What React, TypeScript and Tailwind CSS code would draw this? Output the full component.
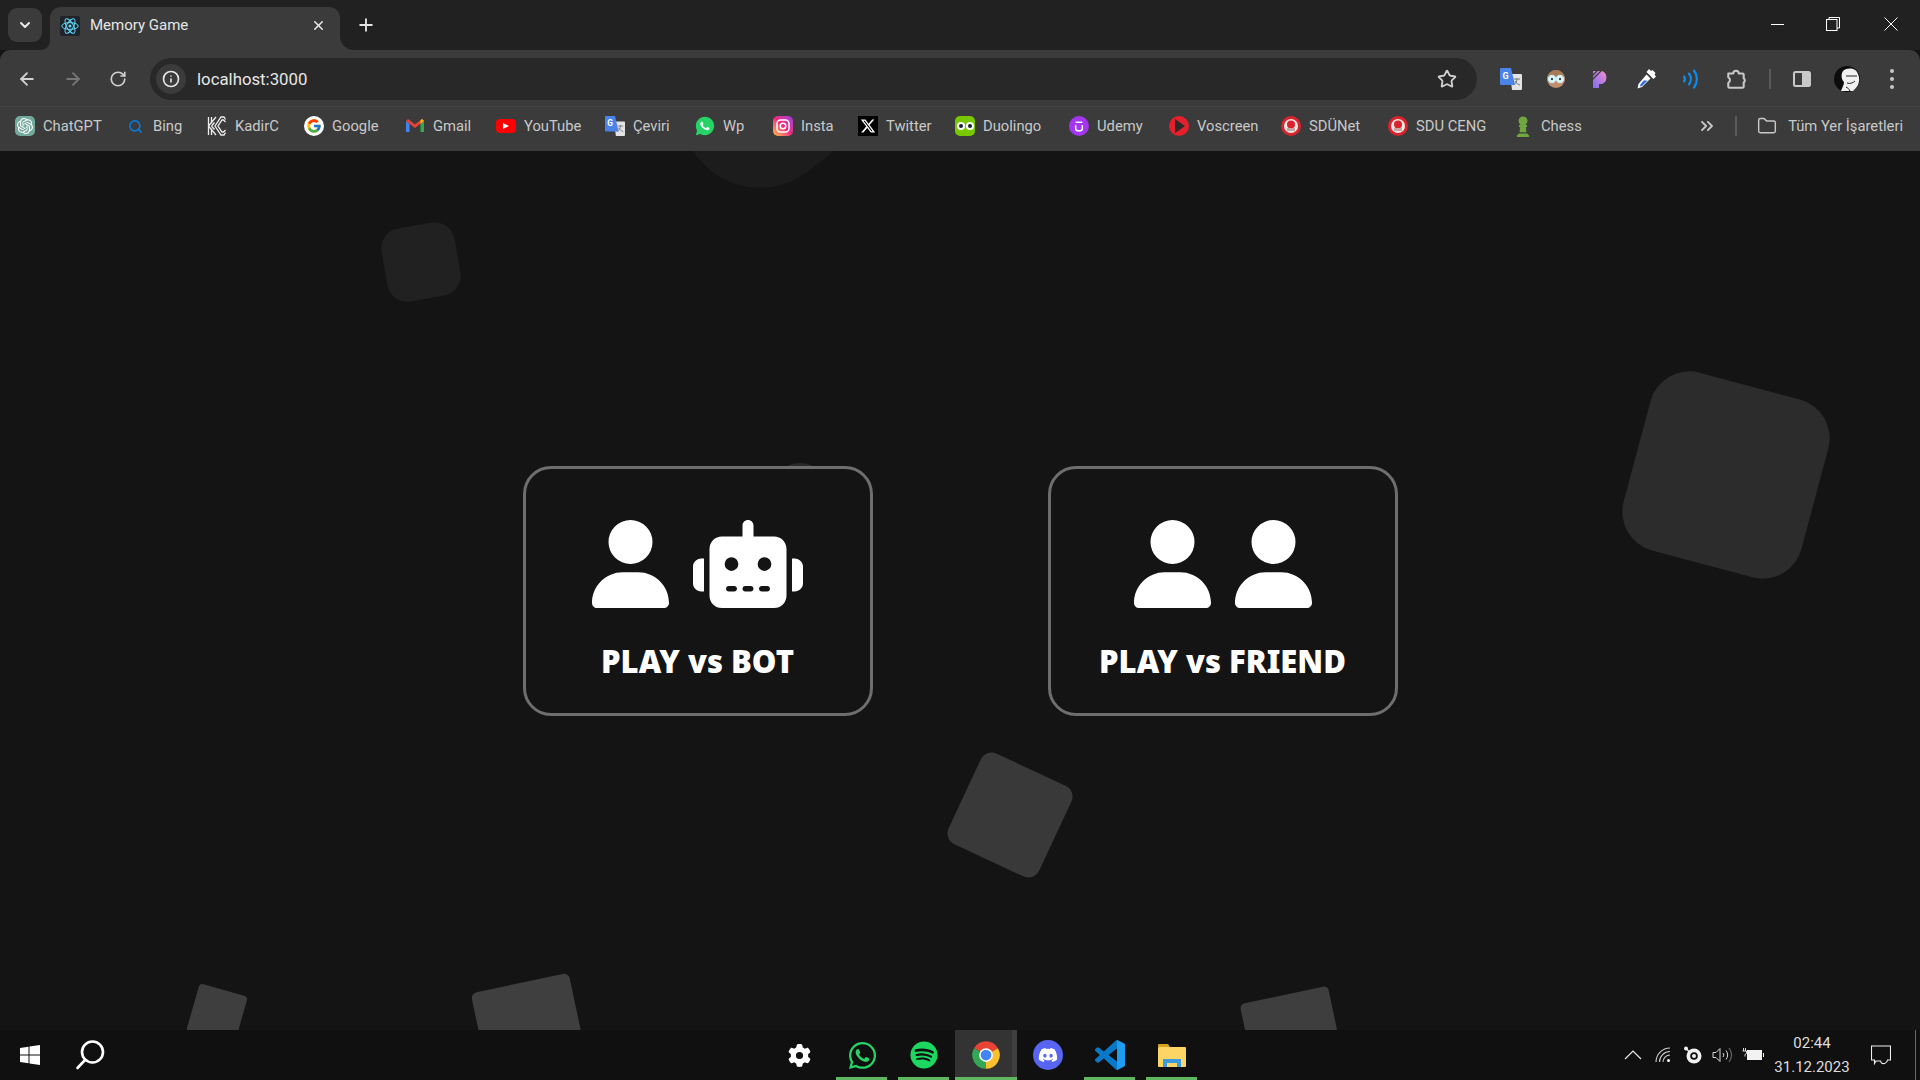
import { ArrowLeft, ArrowRight, RotateCw, Star, ChevronDown, X, Plus, ChevronsRight, Folder, Info, Search } from 'lucide-react';
import { FaUser, FaRobot, FaWhatsapp, FaSpotify, FaDiscord, FaXTwitter, FaChessPawn, FaGear } from 'react-icons/fa6';
import { FcGoogle } from 'react-icons/fc';
import { RiWhatsappFill } from 'react-icons/ri';
import { SiOpenai } from 'react-icons/si';
import type { ReactNode } from 'react';

function TranslateIcon({ big }: { big?: boolean }) {
  return (
    <svg viewBox="0 0 22 22" className={big ? 'w-[22px] h-[22px]' : 'w-[20px] h-[20px]'}>
      <path d="M10 6h11a1 1 0 0 1 1 1v14a1 1 0 0 1-1 1H12z" fill="#e3e3e3" />
      <path d="M14 11h6M17 10v1c0 3-2 5-3.500 6M15 13c1 2 3 3.500 5 4" stroke="#777" strokeWidth="1" fill="none" />
      <path d="M1 0h10l4 17H1a1 1 0 0 1-1-1V1a1 1 0 0 1 1-1z" fill="#4a84e8" />
      <text x="2.500" y="11" fontSize="9" fontWeight="700" fill="#fff" fontFamily="Roboto, sans-serif">G</text>
    </svg>
  );
}

function SduIcon() {
  return (
    <svg viewBox="0 0 20 20" className="w-5 h-5">
      <circle cx="10" cy="10" r="10" fill="#d9232d" />
      <circle cx="10" cy="10" r="7" fill="#f5e9e6" />
      <circle cx="10" cy="8.500" r="4" fill="#d9232d" />
      <rect x="6" y="12" width="8" height="3" fill="#c9a4a0" />
    </svg>
  );
}

type Bookmark = { label: string; width: string; icon: ReactNode };

const bookmarks: Bookmark[] = [
  {
    label: 'ChatGPT',
    width: 'w-[110px]',
    icon: (
      <div className="w-5 h-5 rounded-[5px] bg-[#74aa9c] flex items-center justify-center">
        <SiOpenai className="w-4 h-4 text-white" />
      </div>
    ),
  },
  { label: 'Bing', width: 'w-[82px]', icon: <Search className="w-[15px] h-[15px] text-[#0a78d6]" strokeWidth={2.6} /> },
  {
    label: 'KadirC',
    width: 'w-[97px]',
    icon: (
      <svg viewBox="0 0 20 20" className="w-5 h-5" fill="none" stroke="#eee" strokeWidth="1.300">
        <path d="M1.500 1v18M4.500 1v6.500M4.500 12.500V19M1.500 10L9 1M1.500 10L9 19M4.500 10l3-3.500M4.500 10l3 3.500" />
        <path d="M18.500 3.500L17 1h-3l-6 9 6 9h3l1.500-2.500M18.500 6l-2-2h-1.500L11 10l4 6h1.500l2-2" />
      </svg>
    ),
  },
  {
    label: 'Google',
    width: 'w-[101px]',
    icon: (
      <div className="w-5 h-5 rounded-full bg-white flex items-center justify-center">
        <FcGoogle className="w-4 h-4" />
      </div>
    ),
  },
  {
    label: 'Gmail',
    width: 'w-[91px]',
    icon: (
      <svg viewBox="0 0 20 20" className="w-5 h-5">
        <path d="M1 5v11h3.500V8z" fill="#4285f4" />
        <path d="M19 5v11h-3.500V8z" fill="#34a853" />
        <path d="M1 5l9 7 9-7-2-2-7 5.500L3 3z" fill="#ea4335" />
        <path d="M15.500 8L19 5l-2-2-1.500 1.200z" fill="#fbbc04" />
      </svg>
    ),
  },
  {
    label: 'YouTube',
    width: 'w-[109px]',
    icon: (
      <div className="w-5 h-[14px] rounded-[4px] bg-[#f00] flex items-center justify-center">
        <div className="w-0 h-0 border-y-[3.5px] border-y-transparent border-l-[6px] border-l-white" />
      </div>
    ),
  },
  { label: 'Çeviri', width: 'w-[90px]', icon: <TranslateIcon /> },
  {
    label: 'Wp',
    width: 'w-[78px]',
    icon: (
      <div className="relative w-5 h-5">
        <div className="absolute inset-[3px] rounded-full bg-white" />
        <RiWhatsappFill className="relative w-[22px] h-[22px] -m-px text-[#25d366]" />
      </div>
    ),
  },
  {
    label: 'Insta',
    width: 'w-[85px]',
    icon: (
      <div className="w-5 h-5 rounded-[5px] bg-linear-to-tr from-[#fdb531] via-[#f0247f] to-[#a02ee0] flex items-center justify-center">
        <svg viewBox="0 0 14 14" className="w-[14px] h-[14px]" fill="none" stroke="#fff" strokeWidth="1.500">
          <rect x="1" y="1" width="12" height="12" rx="3.500" />
          <circle cx="7" cy="7" r="2.800" />
        </svg>
      </div>
    ),
  },
  {
    label: 'Twitter',
    width: 'w-[97px]',
    icon: (
      <div className="w-5 h-5 bg-black flex items-center justify-center">
        <FaXTwitter className="w-4 h-4 text-white" />
      </div>
    ),
  },
  {
    label: 'Duolingo',
    width: 'w-[114px]',
    icon: (
      <div className="w-5 h-5 rounded-[5px] bg-[#78c800] flex items-center justify-center gap-px">
        <div className="w-[8px] h-[8px] rounded-full bg-white flex items-center justify-center">
          <div className="w-[4px] h-[4px] rounded-full bg-[#123]" />
        </div>
        <div className="w-[8px] h-[8px] rounded-full bg-white flex items-center justify-center">
          <div className="w-[4px] h-[4px] rounded-full bg-[#123]" />
        </div>
      </div>
    ),
  },
  {
    label: 'Udemy',
    width: 'w-[100px]',
    icon: (
      <div className="w-5 h-5 rounded-full bg-[#a435f0] flex items-center justify-center">
        <svg viewBox="0 0 12 14" className="w-[10px] h-[14px]" fill="none" stroke="#fff" strokeWidth="1.800">
          <path d="M2 6v4a4 3 0 0 0 8 0V6M2 2.500h8" />
        </svg>
      </div>
    ),
  },
  {
    label: 'Voscreen',
    width: 'w-[112px]',
    icon: (
      <svg viewBox="0 0 20 20" className="w-5 h-5">
        <circle cx="10" cy="10" r="10" fill="#e3202c" />
        <path d="M6 3l10 7-10 7z" fill="#2b2b2b" />
      </svg>
    ),
  },
  { label: 'SDÜNet', width: 'w-[107px]', icon: <SduIcon /> },
  { label: 'SDU CENG', width: 'w-[125px]', icon: <SduIcon /> },
  { label: 'Chess', width: 'w-[80px]', icon: <FaChessPawn className="w-5 h-[22px] text-[#6fa83e]" /> },
];

// decorative squares floating behind the menu, all full class names
const shapes = [
  'left-[384px] top-[74px] w-[74px] h-[74px] rounded-[20px] -rotate-10 bg-[#212121]',
  'left-[647px] -top-[220px] w-[240px] h-[240px] rounded-[78px] -rotate-38 bg-[#1c1c1c]',
  'left-[1634px] top-[232px] w-[184px] h-[184px] rounded-[40px] rotate-15 bg-[#2c2c2c]',
  'left-[960px] top-[614px] w-[100px] h-[100px] rounded-[12px] rotate-25 bg-[#393939]',
  'left-[1248px] top-[843px] w-[90px] h-[90px] rounded-[5px] -rotate-12 bg-[#3e3e3e]',
  'left-[192px] top-[838px] w-[50px] h-[50px] rounded-[4px] rotate-16 bg-[#3e3e3e]',
  'left-[480px] top-[831px] w-[100px] h-[100px] rounded-[6px] -rotate-12 bg-[#3f3f3f]',
  'left-[770px] top-[312px] w-[60px] h-[60px] rounded-full bg-[#2a2a2a]',
];

function GameCard({ label, children }: { label: string; children: ReactNode }) {
  return (
    <button className="relative z-10 w-[350px] h-[250px] rounded-[28px] border-[3px] border-[#6e6e6e] bg-[#141414] flex flex-col items-center pt-[51px] text-white">
      <div className="flex gap-[24px]">{children}</div>
      <div className="mt-[33px] font-['Noto_Sans',sans-serif] text-[31px] leading-[40px] font-black whitespace-nowrap">
        {label}
      </div>
    </button>
  );
}

function TaskItem({ children, line, active }: { children: ReactNode; line?: boolean; active?: boolean }) {
  return (
    <div className={active ? 'relative w-[62px] h-full flex items-center justify-center bg-[#333333]' : 'relative w-[62px] h-full flex items-center justify-center'}>
      {children}
      {active && <div className="absolute right-0 top-0 bottom-0 w-[5px] bg-[#3f3f3f]" />}
      {line && <div className={active ? 'absolute bottom-0 inset-x-0 h-[3px] bg-[#5fb760]' : 'absolute bottom-0 left-[5px] right-[6px] h-[3px] bg-[#5fb760]'} />}
    </div>
  );
}

export default function App() {
  return (
    <div className="h-screen w-screen overflow-hidden flex flex-col bg-[#141414] font-[Roboto,sans-serif]">
      {/* tab strip */}
      <div className="h-[50px] shrink-0 bg-[#202120] flex items-end">
        <div className="ml-2 mb-2 w-[34px] h-[34px] rounded-[9px] bg-[#3b3b3b] flex items-center justify-center">
          <ChevronDown className="w-4 h-4 text-[#e8e8e8]" strokeWidth={3} />
        </div>
        <div className="relative ml-2 w-[290px] h-[43px] rounded-t-[11px] bg-[#3b3b3b] flex items-center pl-[10px] pr-[14px] pb-[6px]">
          <div className="absolute -left-[9px] bottom-0 w-[9px] h-[9px] bg-[#3b3b3b]">
            <div className="w-full h-full rounded-br-[9px] bg-[#202120]" />
          </div>
          <div className="absolute -right-[14px] bottom-0 w-[14px] h-[14px] bg-[#3b3b3b]">
            <div className="w-full h-full rounded-bl-[14px] bg-[#202120]" />
          </div>
          <div className="w-5 h-5 bg-[#20232a] rounded-[2px] flex items-center justify-center">
            <svg viewBox="-12 -12 24 24" className="w-[18px] h-[18px]" fill="none" stroke="#61dafb" strokeWidth="1.300">
              <circle r="2" fill="#61dafb" stroke="none" />
              <ellipse rx="11" ry="4.500" />
              <ellipse rx="11" ry="4.500" transform="rotate(60)" />
              <ellipse rx="11" ry="4.500" transform="rotate(120)" />
            </svg>
          </div>
          <span className="ml-[10px] text-[15px] text-[#e6e6e6]">Memory Game</span>
          <X className="ml-auto w-[15px] h-[15px] text-[#e6e6e6]" strokeWidth={2.5} />
        </div>
        <div className="ml-[16px] mb-[15px]">
          <Plus className="w-[20px] h-[20px] text-[#e6e6e6]" strokeWidth={2.2} />
        </div>
        <div className="ml-auto self-start mt-[15px] flex items-center text-white">
          <div className="w-[58px] h-[18px] flex items-center justify-center pl-[4px]">
            <div className="w-[13px] h-px bg-white" />
          </div>
          <div className="w-[58px] h-[18px] flex items-center justify-center">
            <svg viewBox="0 0 14 14" className="w-[14px] h-[14px]" fill="none" stroke="#fff" strokeWidth="1">
              <rect x="0.500" y="2.500" width="10.500" height="11" />
              <path d="M3 2.500V0.500h10.500v10.500H11" />
            </svg>
          </div>
          <div className="w-[58px] h-[18px] flex items-center justify-center">
            <svg viewBox="0 0 14 14" className="w-[14px] h-[14px]" stroke="#fff" strokeWidth="1">
              <path d="M0.500 0.500l13 13M13.500 0.500l-13 13" />
            </svg>
          </div>
        </div>
      </div>

      {/* toolbar */}
      <div className="h-[57px] shrink-0 bg-[#3b3b3b] rounded-t-[10px] flex items-center pt-[2px] border-b border-[#444444]">
        <div className="ml-[4px] w-[46px] flex justify-center">
          <ArrowLeft className="w-[20px] h-[20px] text-[#d0d0d0]" strokeWidth={2.2} />
        </div>
        <div className="w-[46px] flex justify-center">
          <ArrowRight className="w-[20px] h-[20px] text-[#767676]" strokeWidth={2.2} />
        </div>
        <div className="w-[46px] flex justify-center pr-[2px]">
          <RotateCw className="w-[18px] h-[18px] text-[#d0d0d0]" strokeWidth={2.2} />
        </div>
        <div className="ml-[8px] flex-1 h-[42px] rounded-full bg-[#282828] flex items-center pl-[6px] pr-[20px]">
          <div className="w-[30px] h-[30px] rounded-full bg-[#3b3b3b] flex items-center justify-center">
            <Info className="w-[18px] h-[18px] text-[#e6e6e6]" strokeWidth={2.2} />
          </div>
          <span className="ml-[11px] mt-[2px] text-[16.8px] text-[#e6e6e6]">localhost:3000</span>
          <Star className="ml-auto w-[20px] h-[20px] text-[#d0d0d0]" strokeWidth={2.2} />
        </div>
        <div className="w-[443px] shrink-0 flex items-center pl-[11px]">
          <div className="w-[45px] flex justify-center">
            <TranslateIcon big />
          </div>
          <div className="w-[45px] flex justify-center">
            <svg viewBox="0 0 20 20" className="w-5 h-5">
              <circle cx="10" cy="10" r="9" fill="#c08f6c" />
              <path d="M2 9a8 8 0 0 1 16 0z" fill="#a57a55" />
              <circle cx="6" cy="10" r="3.500" fill="#dff" stroke="#cfe8ee" strokeWidth="1.400" />
              <circle cx="14" cy="10" r="3.500" fill="#dff" stroke="#cfe8ee" strokeWidth="1.400" />
              <circle cx="6" cy="10" r="1.200" fill="#444" />
              <circle cx="14" cy="10" r="1.200" fill="#444" />
            </svg>
          </div>
          <div className="w-[45px] flex justify-center">
            <svg viewBox="0 0 20 20" className="w-5 h-5">
              <defs>
                <linearGradient id="pp" x1="0" y1="1" x2="1" y2="0">
                  <stop offset="0" stopColor="#7d6cf0" />
                  <stop offset="1" stopColor="#f58fd0" />
                </linearGradient>
              </defs>
              <path d="M2 2h9a7 7 0 0 1 0 13H8v4H2z" fill="url(#pp)" />
              <path d="M1 7l6-6M1 11l10-10" stroke="#3b3b3b" strokeWidth="1.200" />
            </svg>
          </div>
          <div className="w-[45px] flex justify-center">
            <svg viewBox="0 0 20 20" className="w-5 h-5">
              <path d="M13 0l2 2 1.500-1 3 3-1 1.500 1.500 2-2.500 2.500-7-7z" fill="#fff" />
              <path d="M10.500 5.500l4 4-8.500 8.500-4.500 1.500 1-4.500z" fill="#fff" />
              <path d="M7.500 11.500h4l-5.500 5.500-2 .5.500-2z" fill="#2f6bd6" />
            </svg>
          </div>
          <div className="w-[45px] flex justify-center">
            <svg viewBox="0 0 20 20" className="w-5 h-5" fill="none" stroke="#0a8cf0" strokeWidth="2.200" strokeLinecap="round">
              <path d="M3 7.500a4 4 0 0 1 0 5" />
              <path d="M8 4.500a9 9 0 0 1 0 11" />
              <path d="M13 1.500a14 14 0 0 1 0 17" />
            </svg>
          </div>
          <div className="w-[45px] flex justify-center">
            <svg viewBox="0 0 20 20" className="w-[22px] h-[22px]" fill="none" stroke="#c8c8c8" strokeWidth="1.900" strokeLinejoin="round">
              <path d="M3 5h4.500a2.500 2.500 0 0 1 5 0H16a1 1 0 0 1 1 1v3.500a2 2 0 0 1 0 3.500V17a1 1 0 0 1-1 1H4a1 1 0 0 1-1-1v-3.500a2.800 2.800 0 0 0 0-5z" />
            </svg>
          </div>
          <div className="ml-[11px] w-[2px] h-[20px] bg-[#5a5a5a]" />
          <div className="ml-[8px] w-[45px] flex justify-center">
            <svg viewBox="0 0 18 16" className="w-[18px] h-[16px]">
              <rect x="1" y="1" width="16" height="14" rx="1.500" fill="none" stroke="#c8c8c8" strokeWidth="2" />
              <rect x="9" y="1" width="8" height="14" fill="#c8c8c8" />
            </svg>
          </div>
          <div className="w-[45px] flex justify-center">
            <svg viewBox="0 0 26 26" className="w-[26px] h-[26px]">
              <circle cx="13" cy="13" r="13" fill="#0c0c0c" />
              <path d="M9 5c5-4 13-3 15 3 3 7 0 13-5 17H7c1-3 3-6 3-9-3-3-3-8-1-11z" fill="#f0f0f0" />
              <path d="M12 10h4M18 10h5M16 10h2M13 17c3 1 6 0 8-2M12 21c2 1 3 2 4 4" stroke="#222" strokeWidth="1" fill="none" />
            </svg>
          </div>
          <div className="w-[45px] flex flex-col items-center gap-[4px]">
            <div className="w-1 h-1 rounded-full bg-[#c8c8c8]" />
            <div className="w-1 h-1 rounded-full bg-[#c8c8c8]" />
            <div className="w-1 h-1 rounded-full bg-[#c8c8c8]" />
          </div>
        </div>
      </div>

      {/* bookmarks */}
      <div className="h-[44px] shrink-0 bg-[#3b3b3b] flex items-center pl-[15px] pb-[6px] text-[14.75px] text-[#c9c9c9]">
        {bookmarks.map((b) => (
          <div key={b.label} className={`${b.width} shrink-0 flex items-center gap-[8px] whitespace-nowrap`}>
            <div className="w-5 h-5 shrink-0 flex items-center justify-center">{b.icon}</div>
            <span>{b.label}</span>
          </div>
        ))}
        <div className="ml-auto flex items-center pr-[17px]">
          <ChevronsRight className="w-5 h-5 text-[#c9c9c9]" strokeWidth={2.2} />
          <div className="ml-[18px] w-[2px] h-[20px] bg-[#5a5a5a]" />
          <Folder className="ml-[19px] w-[22px] h-[20px] text-[#c9c9c9]" strokeWidth={1.7} />
          <span className="ml-[10px] whitespace-nowrap">Tüm Yer İşaretleri</span>
        </div>
      </div>

      {/* page */}
      <div className="relative flex-1 min-h-0 overflow-hidden bg-[#141414] flex items-center justify-center gap-[175px]">
        {shapes.map((s) => (
          <div key={s} className={`absolute ${s}`} />
        ))}
        <GameCard label="PLAY vs BOT">
          <FaUser className="w-[77px] h-[88px]" />
          <FaRobot className="w-[110px] h-[88px]" />
        </GameCard>
        <GameCard label="PLAY vs FRIEND">
          <FaUser className="w-[77px] h-[88px]" />
          <FaUser className="w-[77px] h-[88px]" />
        </GameCard>
      </div>

      {/* taskbar */}
      <div className="relative z-20 h-[50px] shrink-0 bg-[#101010] flex items-center">
        <div className="w-[768px] shrink-0 h-full flex items-center pl-[20px]">
          <svg viewBox="0 0 20 20" className="w-5 h-5" fill="#fff">
            <path d="M0 3l8.500-1.200v7.700H0zM9.500 1.600L20 0v9.500H9.500zM0 10.500h8.500v7.700L0 17zM9.500 10.500H20V20L9.500 18.400z" />
          </svg>
          <svg viewBox="0 0 30 30" className="ml-[35px] w-[30px] h-[30px]" fill="none" stroke="#fff" strokeWidth="2.600" strokeLinecap="round">
            <circle cx="17.500" cy="12" r="10.500" />
            <path d="M10 20L2.500 28" />
          </svg>
        </div>
        <TaskItem>
          <FaGear className="w-[23px] h-[23px] text-white" />
        </TaskItem>
        <div className="w-px shrink-0" />
        <TaskItem line>
          <FaWhatsapp className="w-[31px] h-[31px] text-[#25d366]" />
        </TaskItem>
        <TaskItem line>
          <FaSpotify className="w-[28px] h-[28px] text-[#1ed760]" />
        </TaskItem>
        <TaskItem line active>
          <svg viewBox="0 0 24 24" className="w-[30px] h-[30px]">
            <path d="M12 12L2.470 6.500A11 11 0 0 1 21.530 6.500z" fill="#ea4335" />
            <path d="M12 12L21.530 6.500A11 11 0 0 1 12 23z" fill="#fbc02d" />
            <path d="M12 12L12 23A11 11 0 0 1 2.470 6.500z" fill="#34a853" />
            <circle cx="12" cy="12" r="5.500" fill="#fff" />
            <circle cx="12" cy="12" r="4.300" fill="#4285f4" />
          </svg>
        </TaskItem>
        <TaskItem>
          <div className="w-[30px] h-[30px] rounded-full bg-[#5865f2] flex items-center justify-center">
            <FaDiscord className="w-[20px] h-[20px] text-white" />
          </div>
        </TaskItem>
        <TaskItem line>
          <svg viewBox="0 0 24 24" className="w-[30px] h-[30px]">
            <defs>
              <clipPath id="vsl">
                <rect x="0" y="0" width="17.500" height="24" />
              </clipPath>
              <clipPath id="vsr">
                <rect x="17.500" y="0" width="6.500" height="24" />
              </clipPath>
            </defs>
            <path clipPath="url(#vsl)" fill="#0a78c8" d="M23.150 2.587L18.210.21a1.494 1.494 0 0 0-1.705.29l-9.460 8.630-4.120-3.128a.999.999 0 0 0-1.276.057L.327 7.261A1 1 0 0 0 .326 8.740L3.899 12 .326 15.260a1 1 0 0 0 .001 1.479L1.650 17.940a.999.999 0 0 0 1.276.057l4.120-3.128 9.460 8.630a1.492 1.492 0 0 0 1.704.29l4.942-2.377A1.500 1.500 0 0 0 24 20.060V3.939a1.500 1.500 0 0 0-.850-1.352zm-5.146 14.861L10.826 12l7.178-5.448v10.896z" />
            <path clipPath="url(#vsr)" fill="#1f9cf0" d="M23.150 2.587L18.210.21a1.494 1.494 0 0 0-1.705.29V23.500a1.492 1.492 0 0 0 1.704.29l4.942-2.377A1.500 1.500 0 0 0 24 20.060V3.939a1.500 1.500 0 0 0-.850-1.352z" />
          </svg>
        </TaskItem>
        <TaskItem line>
          <svg viewBox="0 0 28 24" className="w-[28px] h-[24px]">
            <path d="M0 2a1 1 0 0 1 1-1h9l2 3h-12z" fill="#d9a21b" />
            <rect x="0" y="4" width="28" height="20" rx="1" fill="#fcd565" />
            <path d="M5 24v-8h18v8h-4v-4h-10v4z" fill="#3b9be0" />
          </svg>
        </TaskItem>

        <div className="ml-auto h-full flex items-center text-white">
          <svg viewBox="0 0 18 10" className="w-[18px] h-[10px]" fill="none" stroke="#e8e8e8" strokeWidth="1.200">
            <path d="M1 9l8-8 8 8" />
          </svg>
          <svg viewBox="0 0 16 16" className="ml-[13px] w-[16px] h-[16px]" fill="none" stroke="#cfcfcf" strokeWidth="1.100">
            <path d="M1 15a14 14 0 0 1 14-14M4.500 15a10.500 10.500 0 0 1 10.500-10.500M8 15a7 7 0 0 1 7-7" />
            <circle cx="13.500" cy="13.500" r="1.500" fill="#fff" stroke="none" />
          </svg>
          <svg viewBox="0 0 20 20" className="ml-[12px] w-[20px] h-[20px]">
            <circle cx="11" cy="11" r="7.500" fill="#f2f2f2" />
            <circle cx="11" cy="11" r="3.800" fill="#101010" />
            <circle cx="11" cy="11" r="2" fill="#f2f2f2" />
            <circle cx="3" cy="3.500" r="2" fill="#f2f2f2" />
            <path d="M3 3.500l5 5" stroke="#f2f2f2" strokeWidth="1.400" />
          </svg>
          <svg viewBox="0 0 20 16" className="ml-[9px] w-[20px] h-[16px]" fill="none" stroke="#d8d8d8" strokeWidth="1">
            <path d="M1 5.500h3l4-4v13l-4-4H1zM11 6a3 3 0 0 1 0 4M14 3.500a7 7 0 0 1 0 9" />
            <path d="M17 1a11 11 0 0 1 0 14" stroke="#777" />
          </svg>
          <svg viewBox="0 0 22 14" className="ml-[10px] w-[22px] h-[14px]">
            <path d="M1.500 0v3M3.500 0v3M.5 3h4v2.500l-1.500 1v2" stroke="#eee" strokeWidth="0.900" fill="none" />
            <rect x="5.500" y="2.500" width="14" height="9" fill="#f2f2f2" stroke="#f2f2f2" />
            <rect x="21" y="5" width="1" height="4" fill="#f2f2f2" />
          </svg>
          <div className="ml-[8px] w-[80px] flex flex-col items-center text-[15px] leading-[24px] text-[#dedede]">
            <span>02:44</span>
            <span>31.12.2023</span>
          </div>
          <svg viewBox="0 0 20 20" className="ml-[19px] w-[20px] h-[20px]" fill="none" stroke="#f0f0f0" strokeWidth="1.100">
            <path d="M.5 1h19v14h-3a4 4 0 0 1-6 3l-1-2H5l-1.500 2.500V15H.5z" />
          </svg>
          <div className="ml-[24px] mr-[4px] w-px h-full bg-[#666666]" />
        </div>
      </div>
    </div>
  );
}
